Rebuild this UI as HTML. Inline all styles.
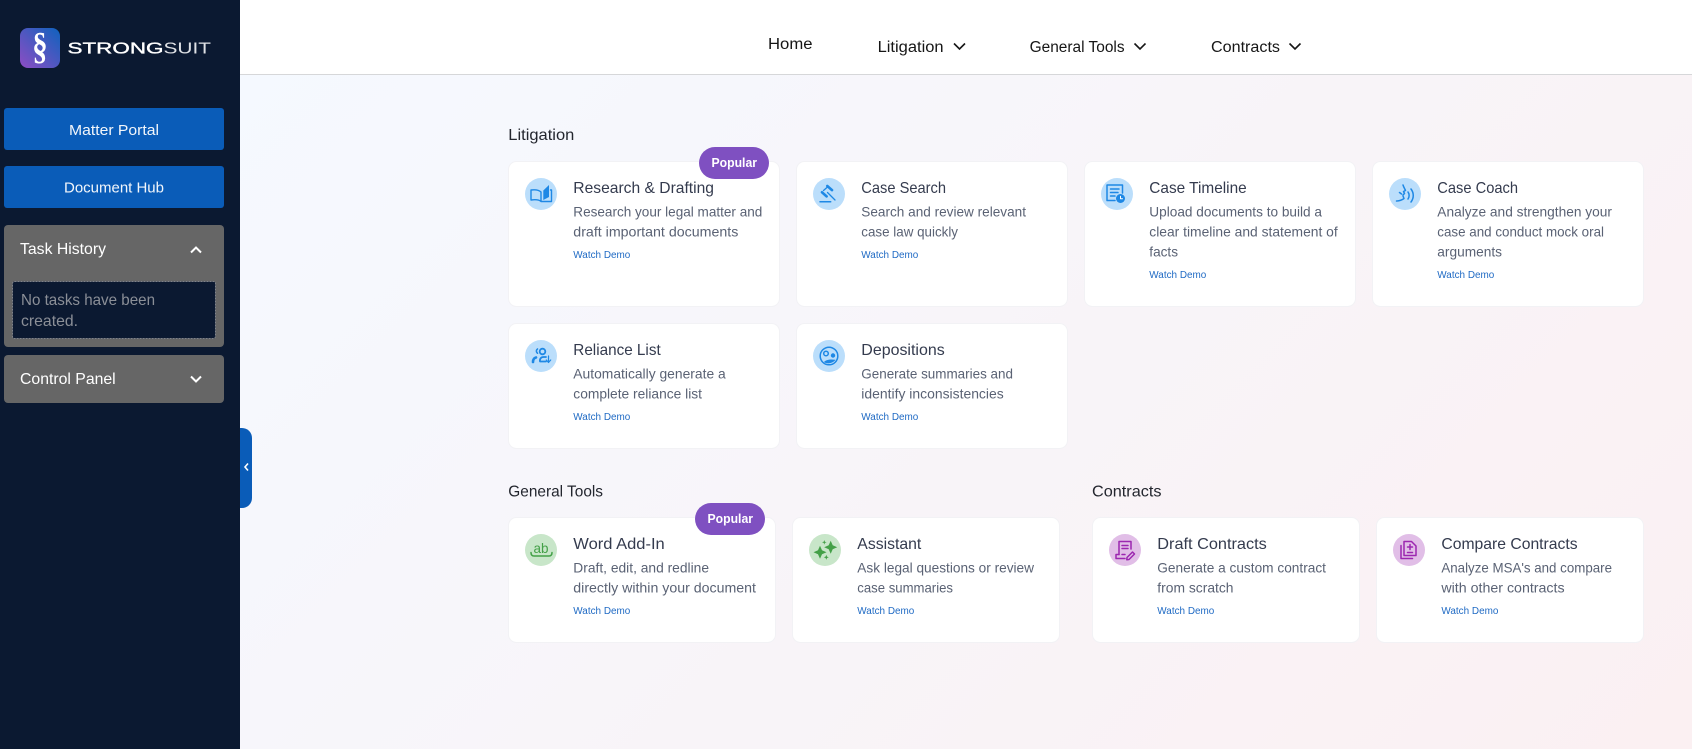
<!DOCTYPE html>
<html lang="en"><head><meta charset="utf-8"><title>StrongSuit</title>
<style>
html,body{margin:0;padding:0;width:1692px;height:749px;overflow:hidden;background:#fff}
svg{display:block}
text{font-family:"Liberation Sans",sans-serif}
.card{fill:#fff;stroke:#f2f2f5;stroke-width:1}
.t{font-size:16px;fill:#343b4e}
.d{font-size:14px;fill:#5a6274}
.w{font-size:10px;fill:#1f6ac4}
.h{font-size:16px;fill:#23262e}
.n{font-size:15.5px;fill:#161616}
</style></head><body>
<svg width="1692" height="749" viewBox="0 0 1692 749" xmlns="http://www.w3.org/2000/svg">
<defs>
<linearGradient id="bg" gradientUnits="userSpaceOnUse" x1="434" y1="-121" x2="1498" y2="943"><stop offset="0" stop-color="#f5f9ff"/><stop offset="1" stop-color="#fbf0f2"/></linearGradient>
<linearGradient id="lg" x1="1" y1="0" x2="0" y2="1"><stop offset="0" stop-color="#0f62bd"/><stop offset="1" stop-color="#8e4dc4"/></linearGradient>
</defs>
<rect x="240" y="74" width="1452" height="675" fill="url(#bg)"/>
<rect x="240" y="0" width="1452" height="74" fill="#fff"/>
<rect x="240" y="74" width="1452" height="1" fill="#d6d7d9"/>

<!-- nav -->
<text class="n" x="768" y="49" textLength="44.5" lengthAdjust="spacingAndGlyphs">Home</text>
<text class="n" x="877.6" y="52" textLength="66" lengthAdjust="spacingAndGlyphs">Litigation</text>
<path d="M954 43.5l5.5 5.5 5.5-5.5" fill="none" stroke="#161616" stroke-width="1.6"/>
<text class="n" x="1029.6" y="52" textLength="95" lengthAdjust="spacingAndGlyphs">General Tools</text>
<path d="M1134.500 43.5l5.500 5.500 5.500-5.500" fill="none" stroke="#161616" stroke-width="1.6"/>
<text class="n" x="1211" y="52" textLength="69" lengthAdjust="spacingAndGlyphs">Contracts</text>
<path d="M1289.500 43.500l5.500 5.500 5.500-5.500" fill="none" stroke="#161616" stroke-width="1.600"/>

<!-- sidebar -->
<rect x="0" y="0" width="240" height="749" fill="#0b1931"/>
<rect x="20" y="28" width="40" height="40" rx="8" fill="url(#lg)"/>
<text transform="translate(40 58.5) scale(.88 1.08)" x="0" y="0" font-size="35" fill="#fff" text-anchor="middle" style="font-family:'Liberation Serif',serif;font-weight:bold">§</text>
<text x="67.500" y="53.700" font-size="15.500" fill="#fff" stroke="#fff" stroke-width=".35" textLength="96" lengthAdjust="spacingAndGlyphs">STRONG</text>
<text x="163.500" y="53.700" font-size="15.500" fill="#dfe1e5" textLength="47.500" lengthAdjust="spacingAndGlyphs">SUIT</text>

<rect x="4" y="108" width="220" height="42" rx="3" fill="#0a5cb8"/>
<text x="69" y="135" font-size="15" fill="#f2f6fb" textLength="90" lengthAdjust="spacingAndGlyphs">Matter Portal</text>
<rect x="4" y="166" width="220" height="42" rx="3" fill="#0a5cb8"/>
<text x="64" y="192.500" font-size="15" fill="#f2f6fb" textLength="100" lengthAdjust="spacingAndGlyphs">Document Hub</text>

<rect x="4" y="225" width="220" height="122" rx="4" fill="#666"/>
<text x="20" y="254" font-size="16" fill="#fff" textLength="86" lengthAdjust="spacingAndGlyphs">Task History</text>
<path d="M191 252.500l5-5 5 5" fill="none" stroke="#fff" stroke-width="2"/>
<rect x="12.500" y="281.500" width="203" height="57" rx="2" fill="#0b1931" stroke="#80838a" stroke-width="1" stroke-dasharray="2 1"/>
<text x="21" y="305" font-size="16" fill="#8b8f97" textLength="134" lengthAdjust="spacingAndGlyphs">No tasks have been</text>
<text x="21" y="326" font-size="16" fill="#8b8f97" textLength="57" lengthAdjust="spacingAndGlyphs">created.</text>

<rect x="4" y="355" width="220" height="48" rx="4" fill="#666"/>
<text x="20" y="384" font-size="16" fill="#fff" textLength="95.700" lengthAdjust="spacingAndGlyphs">Control Panel</text>
<path d="M191 376.500l5 5 5-5" fill="none" stroke="#fff" stroke-width="2"/>

<path d="M240 428h2a10 10 0 0 1 10 10v60a10 10 0 0 1-10 10h-2z" fill="#0a5cb8"/>
<path d="M248 463.500l-3 3.500 3 3.500" fill="none" stroke="#fff" stroke-width="1.600"/>

<!-- section headers -->
<text class="h" x="508.300" y="140" textLength="66" lengthAdjust="spacingAndGlyphs">Litigation</text>
<text class="h" x="508.300" y="496.700" textLength="94.700" lengthAdjust="spacingAndGlyphs">General Tools</text>
<text class="h" x="1092" y="496.700" textLength="69.500" lengthAdjust="spacingAndGlyphs">Contracts</text>

<!-- cards row 1 -->
<rect class="card" x="508.500" y="161.500" width="271" height="145" rx="8"/>
<rect class="card" x="796.500" y="161.500" width="271" height="145" rx="8"/>
<rect class="card" x="1084.500" y="161.500" width="271" height="145" rx="8"/>
<rect class="card" x="1372.500" y="161.500" width="271" height="145" rx="8"/>
<!-- row 2 -->
<rect class="card" x="508.500" y="323.500" width="271" height="125" rx="8"/>
<rect class="card" x="796.500" y="323.500" width="271" height="125" rx="8"/>
<!-- row 3 -->
<rect class="card" x="508.500" y="517.500" width="267" height="125" rx="8"/>
<rect class="card" x="792.500" y="517.500" width="267" height="125" rx="8"/>
<rect class="card" x="1092.500" y="517.500" width="267" height="125" rx="8"/>
<rect class="card" x="1376.500" y="517.500" width="267" height="125" rx="8"/>

<!-- Research -->
<circle cx="541" cy="194" r="16" fill="#bbdefb"/>
<g transform="translate(541 194)" fill="none" stroke="#1e88e5" stroke-width="1.400" stroke-linecap="round" stroke-linejoin="round"><path d="M0-2C-2-4-6-4.500-10-4V6C-6 5.500-2 5.500 0 7.500H10.500V-4H9.500M0-2V7.500"/><path d="M2.300-3.500L8-9V3L2.300 6z" fill="#1e88e5" stroke="none"/></g>
<text class="t" x="573.300" y="193" textLength="140.700" lengthAdjust="spacingAndGlyphs">Research &amp; Drafting</text>
<text class="d" x="573.300" y="216.300" textLength="189" lengthAdjust="spacingAndGlyphs">Research your legal matter and</text>
<text class="d" x="573.300" y="236.500" textLength="165" lengthAdjust="spacingAndGlyphs">draft important documents</text>
<text class="w" x="573.300" y="258" textLength="57" lengthAdjust="spacingAndGlyphs">Watch Demo</text>
<rect x="699" y="147" width="70" height="32" rx="16" fill="#7f50c1"/>
<text x="711.500" y="167" font-size="13" fill="#fff" textLength="45.500" lengthAdjust="spacingAndGlyphs" style="font-weight:bold">Popular</text>

<!-- Case Search -->
<circle cx="829" cy="194" r="16" fill="#bbdefb"/>
<g transform="translate(829 194)" fill="none" stroke="#1e88e5" stroke-linecap="round"><path stroke-width="2.600" d="M-1.700-8L3-3.900M-7-1.700L-2.400 2.400"/><path stroke-width="1.300" d="M-5.500-3.500L-1.500-7M-1.500-1.500L6 6"/><path stroke-width="1.500" d="M-9 7.700H1.700"/></g>
<text class="t" x="861.300" y="193" textLength="84.700" lengthAdjust="spacingAndGlyphs">Case Search</text>
<text class="d" x="861.300" y="216.300" textLength="164.700" lengthAdjust="spacingAndGlyphs">Search and review relevant</text>
<text class="d" x="861.300" y="236.500" textLength="96.700" lengthAdjust="spacingAndGlyphs">case law quickly</text>
<text class="w" x="861.300" y="258" textLength="57" lengthAdjust="spacingAndGlyphs">Watch Demo</text>

<!-- Case Timeline -->
<circle cx="1117" cy="194" r="16" fill="#bbdefb"/>
<g transform="translate(1117 194)" fill="none" stroke="#1e88e5" stroke-width="1.500" stroke-linecap="round" stroke-linejoin="round"><path d="M-2 6.500H-10V-9H5.500V-1"/><path d="M-6.500-5H2M-6.500-1.500H1M-6.500 2H-2"/><circle cx="3.500" cy="4.500" r="4.500" fill="#1e88e5" stroke="none"/><path d="M3.500 2.200V4.800H5.500" stroke="#fff" stroke-width="1"/></g>
<text class="t" x="1149.300" y="193" textLength="97.400" lengthAdjust="spacingAndGlyphs">Case Timeline</text>
<text class="d" x="1149.300" y="216.300" textLength="172.700" lengthAdjust="spacingAndGlyphs">Upload documents to build a</text>
<text class="d" x="1149.300" y="236.500" textLength="188.400" lengthAdjust="spacingAndGlyphs">clear timeline and statement of</text>
<text class="d" x="1149.300" y="256.500" textLength="28.700" lengthAdjust="spacingAndGlyphs">facts</text>
<text class="w" x="1149.300" y="278" textLength="57" lengthAdjust="spacingAndGlyphs">Watch Demo</text>

<!-- Case Coach -->
<circle cx="1405" cy="194" r="16" fill="#bbdefb"/>
<g transform="translate(1405 194)" fill="none" stroke="#1e88e5" stroke-width="1.500" stroke-linecap="round" stroke-linejoin="round"><path d="M-2-9C-1-6 0-5 .5-3.500L-1.500-2.500L-.5-.5L-2 1"/><path d="M-5.500-1.500L-3.500 0M-2 2L-1 4.500C-3 6-6 7-8.500 7" /><path d="M3-2C4.500 0 4.500 3 3 5M6-5C9-1 9 4 6 8"/></g>
<text class="t" x="1437.300" y="193" textLength="80.700" lengthAdjust="spacingAndGlyphs">Case Coach</text>
<text class="d" x="1437.300" y="216.300" textLength="174.700" lengthAdjust="spacingAndGlyphs">Analyze and strengthen your</text>
<text class="d" x="1437.300" y="236.500" textLength="166.700" lengthAdjust="spacingAndGlyphs">case and conduct mock oral</text>
<text class="d" x="1437.300" y="256.500" textLength="64.700" lengthAdjust="spacingAndGlyphs">arguments</text>
<text class="w" x="1437.300" y="278" textLength="57" lengthAdjust="spacingAndGlyphs">Watch Demo</text>

<!-- Reliance List -->
<circle cx="541" cy="356" r="16" fill="#bbdefb"/>
<g transform="translate(541 356)" fill="none" stroke="#1e88e5" stroke-width="1.800" stroke-linecap="round" stroke-linejoin="round"><circle cx="1.500" cy="-4.500" r="2.800"/><path d="M-3.500-7C-5-6-5-4-3.500-2.800" stroke-width="1.600"/><path d="M5 5.500H-1C-1.500 3 0 1 2.500 1H5"/><path d="M-8 6C-8 3.500-7 2-5 1.500" stroke-width="2.600"/><path d="M7.500 0V6M5.300 4L7.500 6.500L9.700 4" stroke-width="1.200"/></g>
<text class="t" x="573.300" y="355" textLength="87.400" lengthAdjust="spacingAndGlyphs">Reliance List</text>
<text class="d" x="573.300" y="378.300" textLength="152.400" lengthAdjust="spacingAndGlyphs">Automatically generate a</text>
<text class="d" x="573.300" y="398.500" textLength="128.700" lengthAdjust="spacingAndGlyphs">complete reliance list</text>
<text class="w" x="573.300" y="420" textLength="57" lengthAdjust="spacingAndGlyphs">Watch Demo</text>

<!-- Depositions -->
<circle cx="829" cy="356" r="16" fill="#bbdefb"/>
<g transform="translate(829 356)" fill="none" stroke="#1e88e5" stroke-width="1.500" stroke-linecap="round"><circle cx="0" cy="0" r="8.800"/><circle cx="-3" cy="-2.500" r="2.300"/><circle cx="4" cy="-.5" r="2.200" fill="#1e88e5" stroke="none"/><path d="M-5 6C-3 3.800 1 3 6.500 3.800C4 7.500 -2 8.500 -5 6z" fill="#1e88e5" stroke="none"/></g>
<text class="t" x="861.300" y="355" textLength="83.400" lengthAdjust="spacingAndGlyphs">Depositions</text>
<text class="d" x="861.300" y="378.300" textLength="151.700" lengthAdjust="spacingAndGlyphs">Generate summaries and</text>
<text class="d" x="861.300" y="398.500" textLength="142.400" lengthAdjust="spacingAndGlyphs">identify inconsistencies</text>
<text class="w" x="861.300" y="420" textLength="57" lengthAdjust="spacingAndGlyphs">Watch Demo</text>

<!-- Word Add-In -->
<circle cx="541" cy="550" r="16" fill="#c8e6c9"/>
<text x="541" y="553" font-size="14" fill="#43a047" text-anchor="middle" textLength="15" lengthAdjust="spacingAndGlyphs">ab</text>
<path d="M531 552.500Q531 556 534 556H549Q552 556 552 552.500" fill="none" stroke="#43a047" stroke-width="1.500" stroke-linecap="round"/>
<text class="t" x="573.300" y="549" textLength="91.400" lengthAdjust="spacingAndGlyphs">Word Add-In</text>
<text class="d" x="573.300" y="572.300" textLength="135.700" lengthAdjust="spacingAndGlyphs">Draft, edit, and redline</text>
<text class="d" x="573.300" y="592.500" textLength="182.700" lengthAdjust="spacingAndGlyphs">directly within your document</text>
<text class="w" x="573.300" y="614" textLength="57" lengthAdjust="spacingAndGlyphs">Watch Demo</text>
<rect x="695" y="503" width="70" height="32" rx="16" fill="#7f50c1"/>
<text x="707.500" y="523" font-size="13" fill="#fff" textLength="45.500" lengthAdjust="spacingAndGlyphs" style="font-weight:bold">Popular</text>

<!-- Assistant -->
<circle cx="825" cy="550" r="16" fill="#c8e6c9"/>
<g transform="translate(825 550)" fill="#43a047"><path d="M5.700-9.200L7.700-4.700L12.200-2.700L7.700-.7L5.700 3.800L3.700-.7L-.8-2.700L3.700-4.700z"/><path d="M-5-4.200L-3 .3L1.500 2.300L-3 4.300L-5 8.800L-7 4.300L-11.500 2.300L-7 .3z"/><path d="M-.7-10L-.1-8.300L1.600-7.700L-.1-7.100L-.7-5.400L-1.300-7.100L-3-7.700L-1.300-8.300z"/><path d="M1.300 4.800L2 6.600L3.800 7.300L2 8L1.300 9.800L.6 8L-1.200 7.300L.6 6.600z"/></g>
<text class="t" x="857.300" y="549" textLength="64" lengthAdjust="spacingAndGlyphs">Assistant</text>
<text class="d" x="857.300" y="572.300" textLength="176.700" lengthAdjust="spacingAndGlyphs">Ask legal questions or review</text>
<text class="d" x="857.300" y="592.500" textLength="95.700" lengthAdjust="spacingAndGlyphs">case summaries</text>
<text class="w" x="857.300" y="614" textLength="57" lengthAdjust="spacingAndGlyphs">Watch Demo</text>

<!-- Draft Contracts -->
<circle cx="1125" cy="550" r="16" fill="#e1bee7"/>
<g transform="translate(1125 550)" fill="none" stroke="#9c27b0" stroke-width="1.500" stroke-linecap="round" stroke-linejoin="round"><path d="M-6 4.500V-8.500H6V-1"/><path d="M-3-4.500H3M-3-1.500H3"/><path d="M-9 8.500H0M-6 4.500H-9V8.500M-3 4.500H0"/><path d="M2 7.500L7.500 2L9.500 4L4 9.500L1.800 9.800z"/></g>
<text class="t" x="1157.300" y="549" textLength="109.500" lengthAdjust="spacingAndGlyphs">Draft Contracts</text>
<text class="d" x="1157.300" y="572.300" textLength="168.700" lengthAdjust="spacingAndGlyphs">Generate a custom contract</text>
<text class="d" x="1157.300" y="592.500" textLength="76.200" lengthAdjust="spacingAndGlyphs">from scratch</text>
<text class="w" x="1157.300" y="614" textLength="57" lengthAdjust="spacingAndGlyphs">Watch Demo</text>

<!-- Compare Contracts -->
<circle cx="1409" cy="550" r="16" fill="#e1bee7"/>
<g transform="translate(1409 550)" fill="none" stroke="#9c27b0" stroke-width="1.500" stroke-linecap="round" stroke-linejoin="round"><path d="M-5-8.500H2.500L7-4V5.500H-5z"/><path d="M-8-4.500V8.500H3.500"/><path d="M1-5.500V-.5M-1.500-3H3.500M-1.500 2.500H3.500"/></g>
<text class="t" x="1441.400" y="549" textLength="136.200" lengthAdjust="spacingAndGlyphs">Compare Contracts</text>
<text class="d" x="1441.400" y="572.300" textLength="170.600" lengthAdjust="spacingAndGlyphs">Analyze MSA's and compare</text>
<text class="d" x="1441.400" y="592.500" textLength="123.200" lengthAdjust="spacingAndGlyphs">with other contracts</text>
<text class="w" x="1441.400" y="614" textLength="57" lengthAdjust="spacingAndGlyphs">Watch Demo</text>
</svg>
</body></html>
